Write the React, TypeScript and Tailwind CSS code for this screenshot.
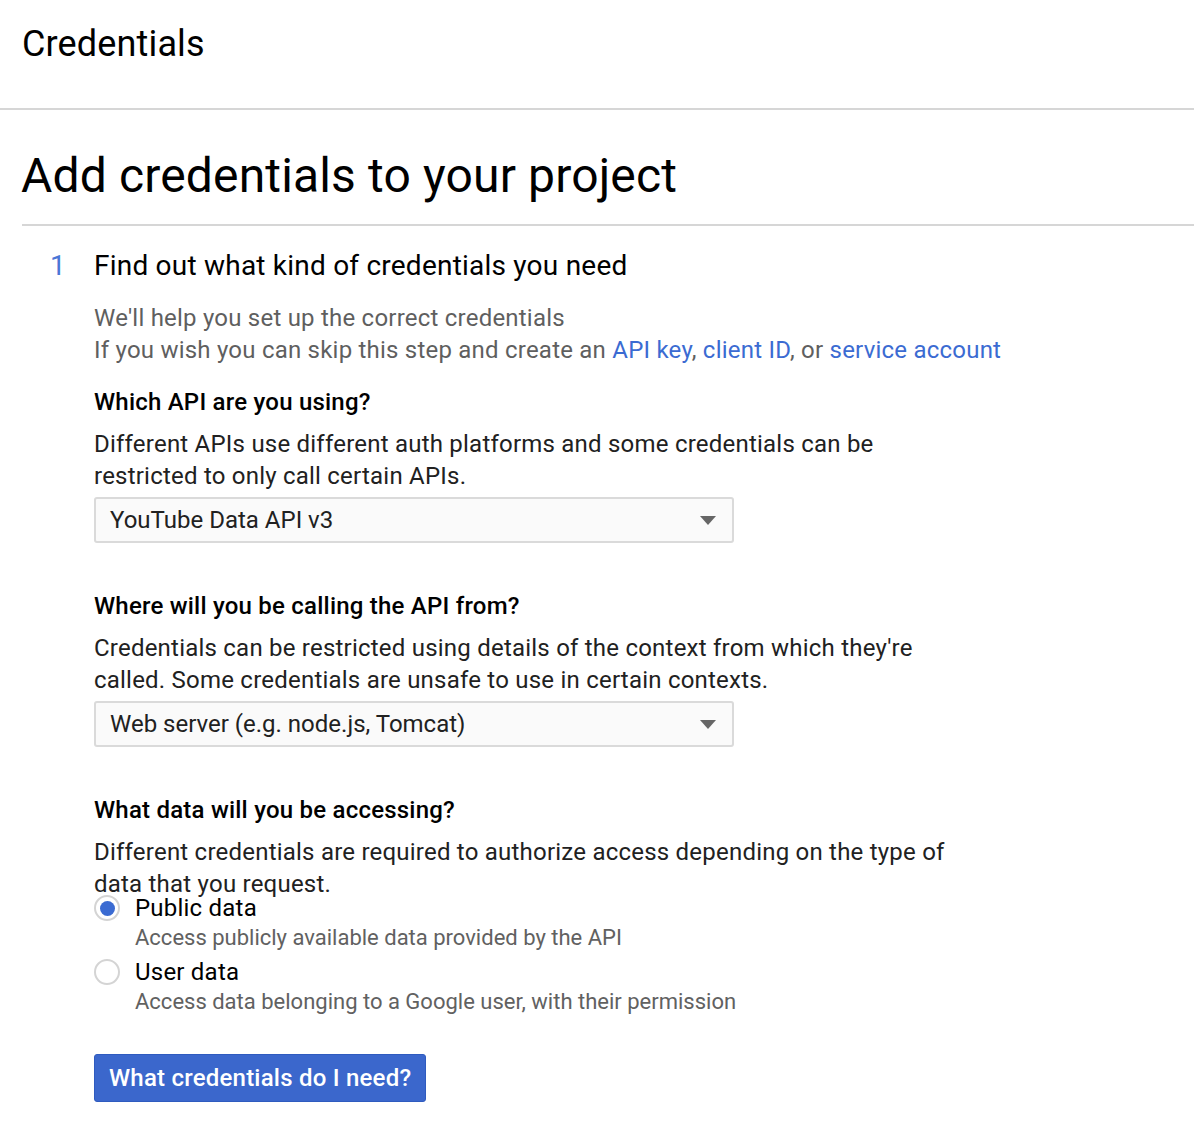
import { useState } from "react";

const selects = [
  {
    title: "Which API are you using?",
    desc: "Different APIs use different auth platforms and some credentials can be restricted to only call certain APIs.",
    value: "YouTube Data API v3",
  },
  {
    title: "Where will you be calling the API from?",
    desc: "Credentials can be restricted using details of the context from which they're called. Some credentials are unsafe to use in certain contexts.",
    value: "Web server (e.g. node.js, Tomcat)",
  },
];

const dataOptions = [
  { id: "public", label: "Public data", hint: "Access publicly available data provided by the API" },
  { id: "user", label: "User data", hint: "Access data belonging to a Google user, with their permission" },
];

function FakeSelect({ value }: { value: string }) {
  return (
    <div className="mt-[5px] flex h-[46px] w-[640px] items-center justify-between rounded-[3px] border-2 border-[#dadada] bg-[#fafafa] pl-[14px] pr-[16px]">
      <span className="text-[24px] leading-[32px] tracking-[0px] text-[#212121]">{value}</span>
      <svg width="16" height="9" viewBox="0 0 16 9">
        <path d="M0 0 L16 0 L8 9 Z" fill="#666666" />
      </svg>
    </div>
  );
}

export default function App() {
  const [dataType, setDataType] = useState("public");

  return (
    <div className="min-h-[1148px] bg-white font-['Roboto',sans-serif] text-[#212121]">
      <div className="h-[110px] border-b-2 border-[#d6d6d6] pl-[22px] pt-[22px]">
        <h2 className="text-[36px] leading-[44px] tracking-[0.15px] text-black">Credentials</h2>
      </div>

      <div className="pl-[22px]">
        <div className="border-b-2 border-[#d6d6d6] pb-[20px] pt-[38px]">
          <h1 className="-ml-px text-[48px] leading-[56px] tracking-[0.15px] text-black">Add credentials to your project</h1>
        </div>

        <div className="flex pt-[22px]">
          <div className="w-[72px] pl-[28px] text-[28px] leading-[36px] text-[#4a76d6]">1</div>
          <div className="flex-1 tracking-[0.22px]">
            <h3 className="text-[28px] leading-[36px] text-black">Find out what kind of credentials you need</h3>

            <div className="mt-[18px] text-[24px] leading-[32px] text-[#5f5f5f]">
              <p>We'll help you set up the correct credentials</p>
              <p>
                If you wish you can skip this step and create an{" "}
                <a className="text-[#3b6bd2]" href="#">API key</a>,{" "}
                <a className="text-[#3b6bd2]" href="#">client ID</a>, or{" "}
                <a className="text-[#3b6bd2]" href="#">service account</a>
              </p>
            </div>

            {selects.map((s, i) => (
              <div key={s.title} className={i === 0 ? "mt-[20px]" : "mt-[47px]"}>
                <h4 className="text-[24px] font-medium leading-[32px] text-black">{s.title}</h4>
                <p className="mt-[10px] w-[840px] text-[24px] leading-[32px] text-[#212121]">{s.desc}</p>
                <FakeSelect value={s.value} />
              </div>
            ))}

            <div className="mt-[47px]">
              <h4 className="text-[24px] font-medium leading-[32px] text-black">What data will you be accessing?</h4>
              <p className="mt-[10px] w-[880px] text-[24px] leading-[32px] text-[#212121]">
                Different credentials are required to authorize access depending on the type of data that you request.
              </p>

              <div className="-mt-[6px]">
                {dataOptions.map((o) => (
                  <label key={o.id} className="block cursor-pointer pb-[4px]" onClick={() => setDataType(o.id)}>
                    <div className="flex h-[28px] items-center">
                      <span className="flex h-[26px] w-[26px] items-center justify-center rounded-full border-2 border-[#d4d4d4] bg-white">
                        {dataType === o.id && <span className="h-[15px] w-[15px] rounded-full bg-[#3b6bd2]" />}
                      </span>
                      <span className="ml-[15px] text-[24px] leading-[28px] text-black">{o.label}</span>
                    </div>
                    <p className="ml-[41px] text-[22px] leading-[32px] tracking-[0px] text-[#616161]">{o.hint}</p>
                  </label>
                ))}
              </div>

              <button className="mt-[32px] h-[48px] rounded-[3px] border border-[#2f5bbf] bg-[#3b67cc] px-[14px] text-[24px] font-medium text-white">
                What credentials do I need?
              </button>
            </div>
          </div>
        </div>
      </div>
    </div>
  );
}
